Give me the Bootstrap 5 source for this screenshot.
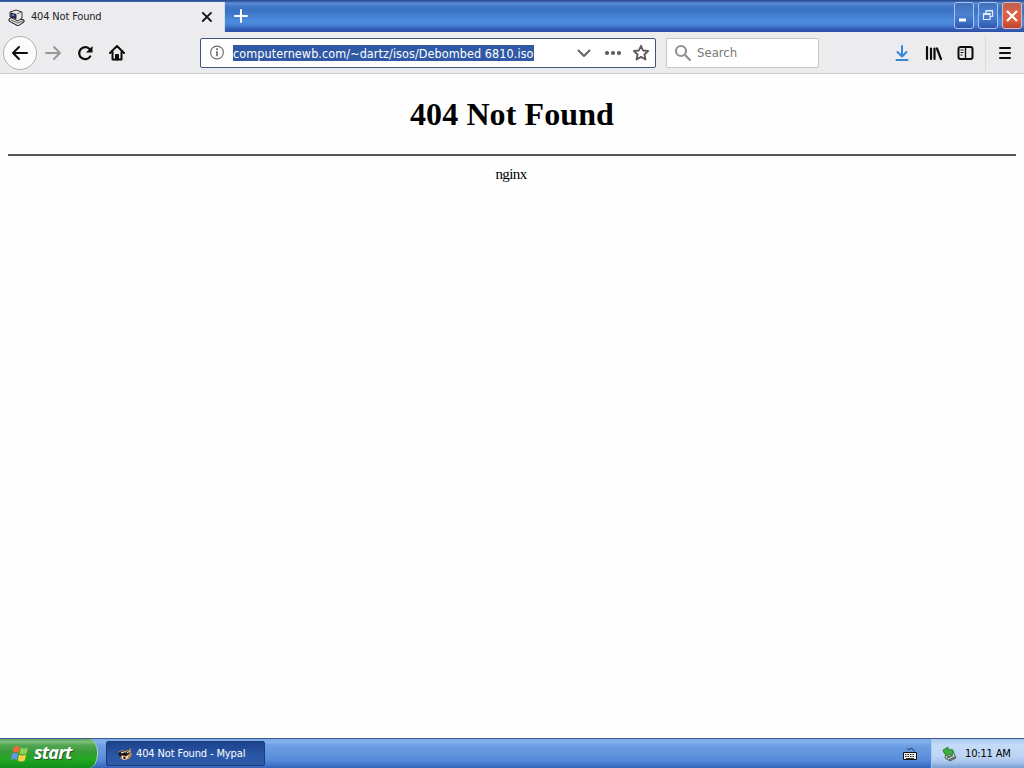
<!DOCTYPE html>
<html lang="en">
<head>
  <meta charset="UTF-8" />
  <title>404 Not Found</title>
  <link href="https://cdn.jsdelivr.net/npm/bootstrap@5.3.0/dist/css/bootstrap.min.css" rel="stylesheet" />
  <style>
    body { width: 1024px; height: 768px; overflow: hidden; background: #fefefe; font-family: "DejaVu Sans Condensed", "DejaVu Sans", sans-serif; font-stretch: condensed; color: #000; }
    svg { display: block; flex: none; }
    span { white-space: nowrap; }

    /* title bar */
    .titlebar { height: 32px; background: linear-gradient(#2c4f9c 0, #30529f 1px, #5c8fd8 3px, #4479c8 6px, #3a70c2 10px, #437fd0 16px, #4c8cdd 21px, #4784d8 25px, #3765bd 28px, #2f52ab 31px); }
    .tab { width: 225px; height: 30px; margin-top: 2px; padding-left: 8px; background: #ececef; border-right: 1px solid #d5dcec; }
    .tab-title { width: 170px; margin-left: 6px; padding-top: 1px; font-size: 11px; letter-spacing: -.17px; color: #222; }
    .winbtn { width: 20px; height: 27px; border: 1px solid #a9c1ec; border-radius: 3px; background: linear-gradient(#4170bc, #4c82cf 45%, #4377cb 65%, #3158b0); }
    .winbtn-close { background: linear-gradient(#b9604f, #d9664e 35%, #db5b3c 70%, #b84531); border-color: #e3b7b9; }

    /* navigation bar */
    .toolbar { height: 42px; padding-left: 3px; background: #ececef; border-bottom: 1px solid #cbcbcb; }
    .back { width: 34px; height: 34px; border: 1px solid #b0b0b1; border-radius: 50%; background: #fcfcfc; }
    .urlbar { width: 456px; height: 30px; margin-left: 74px; padding-left: 9px; background: #fff; border: 1px solid #40587f; border-radius: 2px; }
    .url { width: 301px; height: 16px; margin-left: 8px; line-height: 17px; font-size: 12.5px; letter-spacing: .08px; background: #3059a5; color: #fff; }
    .search { width: 153px; height: 30px; margin-left: 10px; padding-left: 7px; background: #fff; border: 1px solid #c6c6c7; border-radius: 2px; font-size: 13px; color: #777; }
    .search-hint { margin-left: 5px; padding-top: 1px; }
    .divider { width: 1px; height: 36px; margin-left: 10px; background: #dadadb; }

    /* page */
    .page { height: 664px; padding: 22px 8px 0; font-family: "Liberation Serif", serif; }
    .page h1 { margin: 0; height: 37px; line-height: 37px; font-size: 32px; font-weight: bold; letter-spacing: .1px; }
    .page hr { margin: 21px 0 0; height: 2px; border: 0; background: #555; opacity: 1; }
    .page p { margin: 9px 2px 0 0; font-size: 15px; line-height: 18px; letter-spacing: -.6px; }

    /* taskbar */
    .taskbar { height: 30px; border-top: 1px solid #3a5c8c; background: linear-gradient(#7cabe9 0, #82b0ed 3px, #6d9de2 7px, #5f92dd 17px, #5287d8 22px, #3563bc 29px); }
    .start { width: 98px; height: 29px; padding-left: 10px; border-radius: 0 9px 9px 0 / 0 14px 14px 0; border-right: 1px solid #a8d8b0; background: linear-gradient(#63a564 0, #80bf7b 3px, #53a653 6px, #389a39 13px, #22a822 20px, #12921a 28px); }
    .start-label { margin-left: 5px; padding-bottom: 3px; font: italic bold 18px/24px "Open Sans", sans-serif; letter-spacing: -.8px; color: #fff; text-shadow: 1px 1px 1px #235b25; }
    .task { width: 159px; height: 25px; margin-left: 8px; padding-left: 10px; border: 1px solid #1b3d7c; border-radius: 2px; background: linear-gradient(#1d428b, #2956a6 55%, #2e5ba9); color: #fff; font-size: 11px; }
    .task-label { margin-left: 3px; padding-top: 2px; letter-spacing: -.13px; }
    .tray { width: 93px; height: 29px; padding-left: 10px; border-left: 1px solid #a5c8f3; background: linear-gradient(#a9c9f1, #c5dbf8 6px, #bdd5f5 17px, #a9c6ec 23px, #799dd2); font-size: 11px; }
    .clock { margin-left: 7px; padding-top: 2px; letter-spacing: -.15px; }
  </style>
</head>
<body>
<header>
  <div class="titlebar d-flex">
    <div class="tab d-flex align-items-center">
      <svg width="17" height="17" viewBox="0 0 17 17">
        <path d="M1 10 4 8l12 3v2l-6 4-9-5z" fill="#d4d4d8" stroke="#171719" stroke-width="1"/>
        <path d="M2 3 8 1l6 2v6l-4 3-8-4z" fill="#e6e6ea" stroke="#333" stroke-width="1"/>
        <path d="m3 4 5 1.5v4L3 8z" fill="#24327e" stroke="#222"/>
        <path d="m4 5 2 .6v1.600L4 6.600z" fill="#859be2"/>
        <path d="m9 5 4-2M3 11l7 3 5-2" stroke="#777" fill="none"/>
      </svg>
      <span class="tab-title">404 Not Found</span>
      <svg width="12" height="12" viewBox="0 0 12 12" stroke="#171719" stroke-width="1.9" stroke-linecap="round"><path d="m1.800 1.800 8.200 8.200M10 1.800 1.800 10"/></svg>
    </div>
    <svg class="mt-2 ms-2" width="16" height="16" stroke="#fff" stroke-width="2" stroke-linecap="round"><path d="M8 2v12M2 8h12"/></svg>
    <div class="d-flex ms-auto" style="gap: 4px; padding: 2px 2px 3px 0">
      <div class="winbtn"><svg width="18" height="25"><path d="M4 17h7" stroke="#fff" stroke-width="3"/></svg></div>
      <div class="winbtn"><svg width="18" height="25" fill="none" stroke="#e4edff" stroke-width="1.2"><path d="M7 10V7.500h6.500v6H11"/><path d="M4.500 10.500h6.500v6H4.500zM4.500 11.500H11M7 8h6.500"/></svg></div>
      <div class="winbtn winbtn-close"><svg width="18" height="25" stroke="#fff" stroke-width="2.200"><path d="m4 8 10 10M14 8 4 18"/></svg></div>
    </div>
  </div>

  <nav class="toolbar d-flex align-items-center">
    <div class="back d-flex align-items-center justify-content-center">
      <svg width="18" height="16" fill="none" stroke="#0c0c0d" stroke-width="2" stroke-linecap="round" stroke-linejoin="round"><path d="M16 8H2M8 2 2 8l6 6"/></svg>
    </div>
    <svg style="margin-left: 8px" width="17" height="16" fill="none" stroke="#98989a" stroke-width="1.9" stroke-linecap="round" stroke-linejoin="round"><path d="M1 8h14M9 2l6 6-6 6"/></svg>
    <svg style="margin-left: 15px" width="17" height="16" fill="none" stroke="#0c0c0d" stroke-width="2.2" stroke-linecap="round"><path d="M13.200 11.500A6 6 0 1 1 12.500 4"/><path d="M15.500 1v6.500H9z" fill="#0c0c0d" stroke="none"/></svg>
    <svg style="margin-left: 15px" width="17" height="17" fill="none" stroke="#0c0c0d" stroke-width="2" stroke-linecap="round" stroke-linejoin="round"><path d="m1 9 7-7 7 7M3.500 8v7.500h9V8"/><path d="M6.500 15.500v-5h3v5z" fill="#0c0c0d" stroke-width="1"/></svg>

    <div class="urlbar d-flex align-items-center">
      <svg width="15" height="15"><circle cx="7" cy="7.500" r="6.400" fill="none" stroke="#6b6b6c" stroke-width="1.1"/><path d="M7 6.300v5" stroke="#606061" stroke-width="1.6"/><circle cx="7" cy="4.200" r="1" fill="#606061"/></svg>
      <span class="url">computernewb.com/~dartz/isos/Debombed 6810.iso</span>
      <svg style="margin-left: 43px" width="14" height="10" fill="none" stroke="#606061" stroke-width="1.9" stroke-linecap="round" stroke-linejoin="round"><path d="m1.500 2.500 5.500 5.500 5.500-5.500"/></svg>
      <svg style="margin-left: 13px" width="18" height="6" fill="#5c5c5d"><circle cx="3" cy="3" r="2.100"/><circle cx="9" cy="3" r="2.100"/><circle cx="15" cy="3" r="2.100"/></svg>
      <svg style="margin-left: 11px" width="17" height="17" fill="none" stroke="#59595b" stroke-width="1.8" stroke-linejoin="round"><path d="m8 1.800 2.100 4.700 5 .5-3.700 3.500 1.100 5L8 12.900l-4.500 2.600 1.100-5L.9 7l5-.5z"/></svg>
    </div>

    <div class="search d-flex align-items-center">
      <svg width="18" height="18" fill="none" stroke="#929293" stroke-width="2.200" stroke-linecap="round"><circle cx="7" cy="7" r="5"/><path d="m11 11 5 5"/></svg>
      <span class="search-hint">Search</span>
    </div>

    <svg style="margin-left: 76px" width="14" height="18" fill="none" stroke="#3287d9" stroke-width="2" stroke-linecap="round" stroke-linejoin="round"><path d="M7 2v10M2.500 8 7 12.500 11.500 8M1.500 16h11"/></svg>
    <svg style="margin-left: 16px" width="17" height="16" fill="none" stroke="#0c0c0d" stroke-width="2.200" stroke-linecap="round"><path d="M2 2v12M6 3.500V14M9.500 3.500V14M12 3.500 16 14"/></svg>
    <svg style="margin-left: 15px" width="18" height="16" fill="none" stroke="#0c0c0d"><rect x="1.500" y="2" width="14" height="12" rx="2" stroke-width="2"/><path d="M8.500 2v12" stroke-width="1.400"/><path d="M3.500 5h3M3.500 7.500h3M3.500 10h2" stroke-width="1"/></svg>
    <div class="divider"></div>
    <svg style="margin-left: 12px" width="14" height="14" stroke="#0c0c0d" stroke-width="2" stroke-linecap="round"><path d="M2 2h10M2 7h10M2 12h10"/></svg>
  </nav>
</header>

<main class="page text-center">
  <h1>404 Not Found</h1>
  <hr />
  <p>nginx</p>
</main>

<footer class="taskbar d-flex align-items-center">
  <div class="start d-flex align-items-center">
    <svg width="19" height="18" viewBox="0 0 19 18">
      <path d="M4 2q3-2 6 0L8.500 8q-3-2-6 0z" fill="#ee6a38"/>
      <path d="M11 2.500q3 2 7 0L16.500 8.500q-3.500 2-7 0z" fill="#8fd15b"/>
      <path d="M2.200 9q3-2 6 0L6.700 15q-3-2-6 0z" fill="#6495ec"/>
      <path d="M9.200 9.500q3 2 7 0l-1.500 6q-3.500 2-7 0z" fill="#f8d144"/>
    </svg>
    <span class="start-label">start</span>
  </div>
  <div class="task d-flex align-items-center">
    <svg width="16" height="16" viewBox="0 0 16 16">
      <path d="m1 6 4-2 2 1 4-1 3-2v4l1 3-3 4-5 1-4-2 1-2z" fill="#b98450"/>
      <path d="m1 7 4-2 3 2 5-3-1 4-3 2-4-1-2 2z" fill="#151720"/>
      <path d="m5 10 3 1 4-2-2 4-3 1-2-1z" fill="#f4dfc0"/>
      <path d="m4 7 3-1M10 7l3-2" stroke="#fff"/>
      <circle cx="7.500" cy="12" r="1.200" fill="#171717"/>
    </svg>
    <span class="task-label">404 Not Found - Mypal</span>
  </div>
  <svg class="ms-auto" style="margin-right: 14px" width="14" height="14" viewBox="0 0 14 14">
    <path d="M4 1.500q1.500 2 3 .5t3 .5 2 1" fill="none" stroke="#111" stroke-width=".8"/>
    <path d="M.5 5.500h13v7H.5z" fill="#eee" stroke="#111"/>
    <path d="M2 7.500h10M2 9.500h10" stroke="#222" stroke-dasharray="1.500 1"/>
    <path d="M3 11.500h8" stroke="#333"/>
  </svg>
  <div class="tray d-flex align-items-center">
    <svg width="16" height="16" viewBox="0 0 16 16">
      <path d="m4 7 7-2 3 7-6 3-5-3z" fill="#d7e3d6" stroke="#465d50"/>
      <path d="m5 12 6-3M7 14l6-3" stroke="#536560" stroke-width="1.500"/>
      <path d="m1 4 5-3v2l5 1v4L6 9v2L2 7z" fill="#3fac42" stroke="#287c32" stroke-width=".8"/>
    </svg>
    <span class="clock">10:11 AM</span>
  </div>
</footer>
<script src="https://cdn.jsdelivr.net/npm/bootstrap@5.3.0/dist/js/bootstrap.bundle.min.js"></script>
</body>
</html>
